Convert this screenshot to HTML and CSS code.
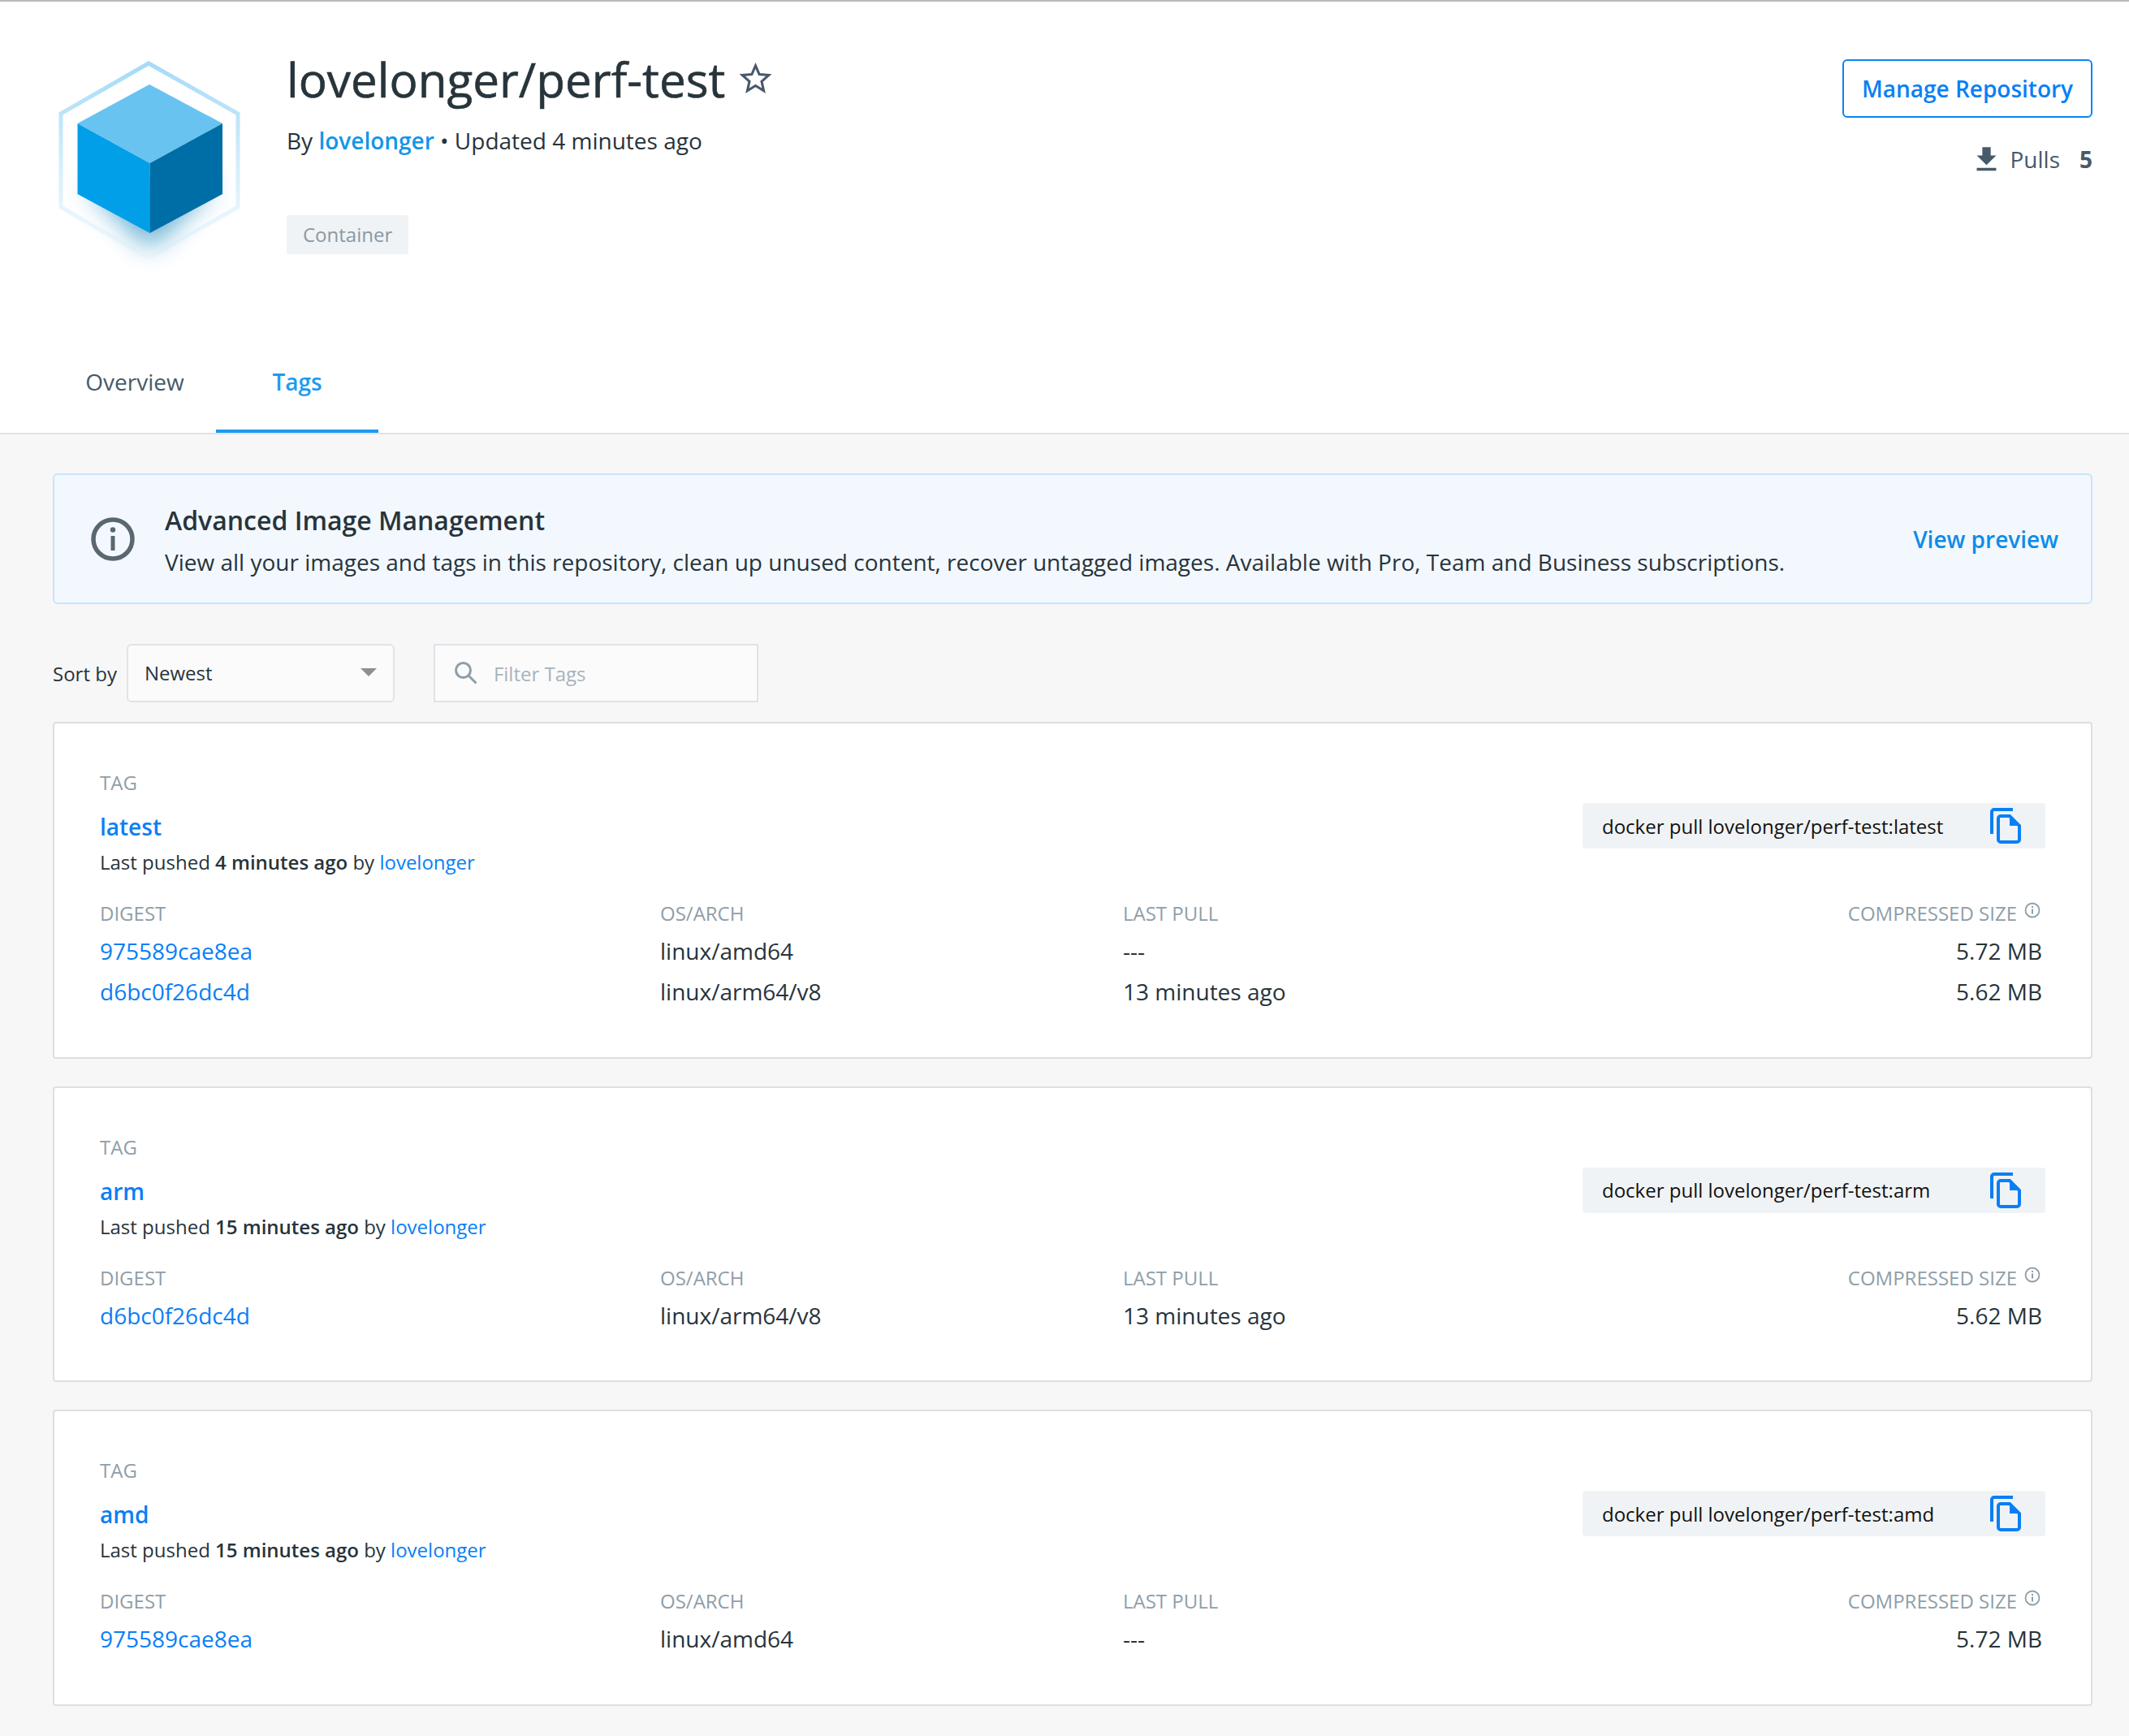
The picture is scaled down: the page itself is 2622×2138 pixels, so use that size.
FILE: index.html
```html
<!DOCTYPE html>
<html lang="en">
<head>
<meta charset="utf-8">
<title>lovelonger/perf-test</title>
<link rel="stylesheet" href="styles.css">
</head>
<body>
<header class="header">
  <div class="header-top">
    <svg class="logo" viewBox="60 60 260 280" width="260" height="280" aria-hidden="true">
      <defs>
        <linearGradient id="hexfade" x1="0" y1="76" x2="0" y2="310" gradientUnits="userSpaceOnUse">
          <stop offset="0" stop-color="#a4dbf7"/>
          <stop offset="0.55" stop-color="#d4eefb"/>
          <stop offset="0.78" stop-color="#e6f5fd"/>
          <stop offset="1" stop-color="#fafdff"/>
        </linearGradient>
        <filter id="blur" x="-50%" y="-50%" width="200%" height="200%"><feGaussianBlur stdDeviation="17"/></filter>
      </defs>
      <path d="M183 78 L293 140 V255 L183 318 L75 255 V140 Z" fill="#fff" stroke="url(#hexfade)" stroke-width="5"/>
      <path d="M105 225 L185 305 L265 225 Z" fill="#0a7fb8" opacity="0.7" filter="url(#blur)"/>
      <path d="M184 104 L274 152 L184.500 201 L95.500 152 Z" fill="#69c3f0"/>
      <path d="M95.500 152 L184.500 201 V287 L95.500 239 Z" fill="#009fe8"/>
      <path d="M274 152 L184.500 201 V287 L274 239 Z" fill="#006ea6"/>
    </svg>
    <div class="repo-info">
      <div class="repo-title">
        <h1>lovelonger/perf-test</h1>
        <svg class="star" viewBox="0 0 24 24" width="41" height="41" aria-hidden="true"><path d="M12 2.800l2.700 6.300 6.800.6-5.100 4.500 1.500 6.700L12 17.300l-5.900 3.600 1.500-6.700-5.100-4.500 6.800-.6z" fill="none" stroke="#47596a" stroke-width="1.800"/></svg>
      </div>
      <p class="repo-meta">By <a class="owner">lovelonger</a> • Updated 4 minutes ago</p>
      <span class="chip">Container</span>
    </div>
    <div class="repo-side">
      <button class="manage">Manage Repository</button>
      <div class="pulls">
        <svg viewBox="0 0 24 24" width="41" height="41" aria-hidden="true"><path d="M19 9h-4V3H9v6H5l7 7 7-7zM5 18v2h14v-2H5z" fill="#47596a"/></svg>
        <span class="pulls-label">Pulls</span>
        <strong>5</strong>
      </div>
    </div>
  </div>
  <nav class="tabs">
    <a class="tab">Overview</a>
    <a class="tab active">Tags</a>
  </nav>
</header>
<main class="main">
  <section class="banner">
    <svg class="banner-icon" viewBox="0 0 56 56" width="56" height="56" aria-hidden="true"><circle cx="28" cy="28" r="24" fill="none" stroke="#5b6770" stroke-width="5.500"/><rect x="25.500" y="24" width="5" height="18" fill="#5b6770"/><circle cx="28" cy="16.500" r="3.200" fill="#5b6770"/></svg>
    <div class="banner-body">
      <h2>Advanced Image Management</h2>
      <p>View all your images and tags in this repository, clean up unused content, recover untagged images. Available with Pro, Team and Business subscriptions.</p>
    </div>
    <a class="preview">View preview</a>
  </section>
  <div class="toolbar">
    <span class="sort-label">Sort by</span>
    <div class="select">Newest<span class="caret"></span></div>
    <div class="filter">
      <svg viewBox="0 0 28 28" width="28" height="28" aria-hidden="true"><circle cx="10.500" cy="10.500" r="9" fill="none" stroke="#8f9ea8" stroke-width="3"/><path d="M17 17 L26.500 26.500" stroke="#8f9ea8" stroke-width="3"/></svg>
      <span>Filter Tags</span>
    </div>
  </div>

  <article class="card">
    <div class="card-top">
      <div class="tag-info">
        <div class="label">TAG</div>
        <a class="tag-name">latest</a>
        <p class="pushed">Last pushed <b>4 minutes ago</b> by <a>lovelonger</a></p>
      </div>
      <div class="pull-box"><span>docker pull lovelonger/perf-test:latest</span>
        <svg viewBox="0 0 38 44" width="38" height="44" aria-hidden="true"><path class="copy" d="M28 2H5a3 3 0 0 0-3 3V32M24 10H13a3 3 0 0 0-3 3V39a3 3 0 0 0 3 3H33a3 3 0 0 0 3-3V22Z"/><path class="copy-fold" d="M24 8L38 22H24Z"/></svg></div>
    </div>
    <div class="digests">
      <div class="label">DIGEST</div><div class="label">OS/ARCH</div><div class="label">LAST PULL</div>
      <div class="label size-head">COMPRESSED SIZE<svg viewBox="0 0 20 20" width="20" height="20" aria-hidden="true"><circle cx="10" cy="10" r="8.500" fill="none" stroke="#8f9ea8" stroke-width="1.800"/><rect x="9" y="8.500" width="2" height="6" fill="#8f9ea8"/><rect x="9" y="5" width="2" height="2" fill="#8f9ea8"/></svg></div>
      <a class="cell">975589cae8ea</a><div class="cell">linux/amd64</div><div class="cell">---</div><div class="cell size">5.72 MB</div>
      <a class="cell">d6bc0f26dc4d</a><div class="cell">linux/arm64/v8</div><div class="cell">13 minutes ago</div><div class="cell size">5.62 MB</div>
    </div>
  </article>

  <article class="card">
    <div class="card-top">
      <div class="tag-info">
        <div class="label">TAG</div>
        <a class="tag-name">arm</a>
        <p class="pushed">Last pushed <b>15 minutes ago</b> by <a>lovelonger</a></p>
      </div>
      <div class="pull-box"><span>docker pull lovelonger/perf-test:arm</span>
        <svg viewBox="0 0 38 44" width="38" height="44" aria-hidden="true"><path class="copy" d="M28 2H5a3 3 0 0 0-3 3V32M24 10H13a3 3 0 0 0-3 3V39a3 3 0 0 0 3 3H33a3 3 0 0 0 3-3V22Z"/><path class="copy-fold" d="M24 8L38 22H24Z"/></svg></div>
    </div>
    <div class="digests">
      <div class="label">DIGEST</div><div class="label">OS/ARCH</div><div class="label">LAST PULL</div>
      <div class="label size-head">COMPRESSED SIZE<svg viewBox="0 0 20 20" width="20" height="20" aria-hidden="true"><circle cx="10" cy="10" r="8.500" fill="none" stroke="#8f9ea8" stroke-width="1.800"/><rect x="9" y="8.500" width="2" height="6" fill="#8f9ea8"/><rect x="9" y="5" width="2" height="2" fill="#8f9ea8"/></svg></div>
      <a class="cell">d6bc0f26dc4d</a><div class="cell">linux/arm64/v8</div><div class="cell">13 minutes ago</div><div class="cell size">5.62 MB</div>
    </div>
  </article>

  <article class="card">
    <div class="card-top">
      <div class="tag-info">
        <div class="label">TAG</div>
        <a class="tag-name">amd</a>
        <p class="pushed">Last pushed <b>15 minutes ago</b> by <a>lovelonger</a></p>
      </div>
      <div class="pull-box"><span>docker pull lovelonger/perf-test:amd</span>
        <svg viewBox="0 0 38 44" width="38" height="44" aria-hidden="true"><path class="copy" d="M28 2H5a3 3 0 0 0-3 3V32M24 10H13a3 3 0 0 0-3 3V39a3 3 0 0 0 3 3H33a3 3 0 0 0 3-3V22Z"/><path class="copy-fold" d="M24 8L38 22H24Z"/></svg></div>
    </div>
    <div class="digests">
      <div class="label">DIGEST</div><div class="label">OS/ARCH</div><div class="label">LAST PULL</div>
      <div class="label size-head">COMPRESSED SIZE<svg viewBox="0 0 20 20" width="20" height="20" aria-hidden="true"><circle cx="10" cy="10" r="8.500" fill="none" stroke="#8f9ea8" stroke-width="1.800"/><rect x="9" y="8.500" width="2" height="6" fill="#8f9ea8"/><rect x="9" y="5" width="2" height="2" fill="#8f9ea8"/></svg></div>
      <a class="cell">975589cae8ea</a><div class="cell">linux/amd64</div><div class="cell">---</div><div class="cell size">5.72 MB</div>
    </div>
  </article>
</main>
</body>
</html>
```
FILE: styles.css
```css
* { box-sizing: border-box; }
html, body { margin: 0; padding: 0; }
body {
  background: #f7f7f7;
  border-top: 2px solid #b9b9b9;
  font-family: "Open Sans", "Noto Sans", sans-serif;
  color: #27343b;
  font-size: 28px;
  min-height: 2136px;
}
h1, h2, p { margin: 0; font-weight: 400; }
a { color: #0a7ff5; text-decoration: none; }

.header { background: #fff; border-bottom: 2px solid #dfe3e8; }
.header-top { display: flex; padding: 58px 45px 0 60px; height: 405px; }
.logo { display: block; flex: none; margin-right: 33px; }
.repo-info { flex: 1; }
.repo-title { display: flex; align-items: center; gap: 17px; height: 76px; }
.repo-title h1 { font-size: 58.4px; line-height: 76px; font-weight: 400; color: #27343b; -webkit-text-stroke: 0.6px #27343b; }
.star { margin-top: -3px; }
.repo-meta { font-size: 28px; line-height: 44px; margin-top: 15px; }
.owner { color: #1296e8; font-weight: 600; }
.chip {
  display: inline-block; height: 48px; line-height: 48px; margin-top: 70px; padding: 0 20px;
  font-size: 24px; color: #8a99a4; background: #f0f3f5; border-radius: 3px;
}
.repo-side { display: flex; flex-direction: column; align-items: flex-end; padding-top: 13px; }
.manage {
  height: 72px; width: 308px; padding: 0; background: #fff; border: 2px solid #0a84f5; border-radius: 6px;
  color: #0a7ff5; font: 600 28px "Open Sans", sans-serif;
}
.pulls { display: flex; align-items: center; margin-top: 29px; height: 44px; color: #47596a; font-size: 28px; }
.pulls-label { margin-left: 8px; font-weight: 400; }
.pulls strong { margin-left: 24px; font-weight: 700; }

.tabs { display: flex; padding-left: 66px; }
.tab {
  width: 200px; height: 126px; line-height: 126px; text-align: center; font-size: 28px; color: #47596a;
}
.tab.active { color: #1d9bf0; font-weight: 600; border-bottom: 4px solid #1d9bf0; }

.main { padding: 48px 45px 0 65px; }
.banner {
  display: flex; align-items: center; height: 161px; padding: 0 40px 0 44px;
  background: #f3f8fe; border: 2px solid #c8e4fb; border-radius: 6px;
}
.banner-icon { flex: none; margin-right: 36px; }
.banner-body { flex: 1; padding-top: 3px; }
.banner h2 { font-size: 32px; line-height: 44px; font-weight: 600; margin-bottom: 9px; }
.banner p { font-size: 28px; line-height: 40px; }
.preview { color: #0d8ce8; font-size: 28px; font-weight: 600; }

.toolbar { display: flex; align-items: center; height: 72px; margin-top: 49px; font-size: 24px; }
.sort-label { margin-right: 12px; }
.select {
  position: relative; width: 330px; height: 72px; line-height: 67px; padding-left: 20px;
  background: #fbfbfb; border: 2px solid #e0e3e7; border-radius: 6px;
}
.caret {
  position: absolute; right: 20px; top: 28px; border-style: solid; border-width: 10px 10px 0;
  border-color: #8f8f8f transparent transparent;
}
.filter {
  display: flex; align-items: center; gap: 20px; width: 400px; height: 72px; margin-left: 48px; padding-left: 24px;
  background: #fbfbfb; border: 2px solid #e0e3e7; color: #a7b3bb;
}

.card {
  margin-top: 24px; padding: 57px 56px 55.6px; background: #fff; border: 2px solid #dcdfe3; border-radius: 4px;
}
.card + .card { margin-top: 34px; }
.card-top { display: flex; justify-content: space-between; }
.label { font-size: 24px; line-height: 32px; color: #8f9ea8; }
.tag-name { display: block; margin-top: 18px; font-size: 28px; line-height: 40px; font-weight: 600; }
.pushed { margin-top: 6px; font-size: 24px; line-height: 36px; }
.pushed b { font-weight: 600; }
.pull-box {
  display: flex; align-items: center; justify-content: space-between; align-self: flex-start;
  width: 570px; height: 56px; margin-top: 41px; padding: 0 30px 0 24px;
  background: #f0f3f5; border-radius: 4px; font-size: 24px; color: #111;
}
.copy { fill: none; stroke: #0a7ff5; stroke-width: 4; }
.copy-fold { fill: #0a7ff5; }
.digests {
  display: grid; grid-template-columns: 690px 570px 1fr auto; grid-template-rows: 37px; grid-auto-rows: 50px;
  margin-top: 29px; padding-right: 4px;
}
.digests .label { height: 37px; }
.size-head { display: flex; align-items: flex-start; justify-content: flex-end; gap: 9px; padding-right: 2px; }
.size-head svg { margin-top: 2px; }
.cell { font-size: 28px; line-height: 50px; }
.size { text-align: right; }
```
